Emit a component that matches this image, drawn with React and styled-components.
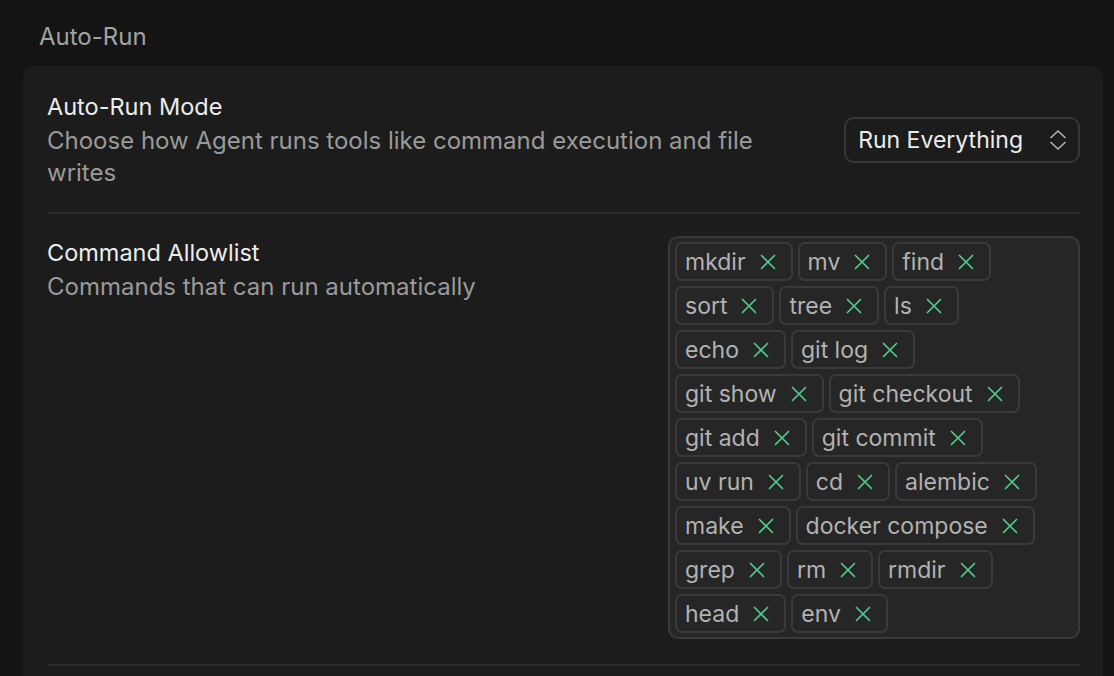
import React from 'react'
import styled, { createGlobalStyle } from 'styled-components'

const GlobalStyle = createGlobalStyle`
  html, body {
    margin: 0;
    padding: 0;
    background: #141414;
    font-family: Inter, "Noto Sans", "Liberation Sans", sans-serif;
    -webkit-font-smoothing: antialiased;
  }
`

const Page = styled.div`
  padding: 21px 11px 0 23px;
  height: 676px;
  box-sizing: border-box;
  overflow: hidden;
`

const SectionTitle = styled.div`
  color: #a3a3a3;
  font-size: 24px;
  line-height: 32px;
  padding-left: 16px;
  margin-bottom: 13px;
`

const Card = styled.div`
  background: #1c1c1c;
  border-radius: 12px;
  padding: 0 23px 0 24px;
  min-height: 700px;
`

const Row = styled.div`
  display: flex;
  align-items: ${(p) => (p.top ? 'flex-start' : 'center')};
  justify-content: space-between;
  gap: 32px;
  padding: ${(p) => (p.top ? '22px 0 25px' : '24px 0 23px')};
  border-bottom: 2px solid #2c2c2c;
`

const Info = styled.div`
  flex: 1;
  min-width: 0;
  padding-top: 1px;
`

const Label = styled.div`
  color: #ececec;
  font-size: 23.5px;
  line-height: 32px;
`

const Hint = styled.div`
  color: #9a9a9a;
  font-size: 24px;
  line-height: 32px;
  margin-top: 2px;
`

const Select = styled.div`
  display: flex;
  align-items: center;
  gap: 26px;
  height: 46px;
  box-sizing: border-box;
  padding: 0 11px 0 12px;
  border: 2px solid #373737;
  border-radius: 10px;
  color: #ececec;
  font-size: 23px;
  flex-shrink: 0;
`

const TagBox = styled.div`
  width: 412px;
  flex-shrink: 0;
  box-sizing: border-box;
  display: flex;
  flex-wrap: wrap;
  align-content: flex-start;
  gap: 5px;
  padding: 4px 16px 4px 5px;
  background: #262626;
  border: 2px solid #393939;
  border-radius: 10px;
`

const Tag = styled.div`
  display: flex;
  align-items: center;
  gap: 14px;
  height: 39px;
  box-sizing: border-box;
  padding: 0 15px 0 8px;
  border: 2px solid #3a3a3a;
  border-radius: 7px;
  color: #b2b2b2;
  font-size: 23px;
`

const Remove = styled.svg`
  width: 16px;
  height: 16px;
  flex-shrink: 0;
`

function Chevrons() {
  return (
    <svg width="18" height="24" viewBox="0 0 18 24" fill="none" stroke="#b5b5b5" strokeWidth="1.6" strokeLinecap="round" strokeLinejoin="round">
      <path d="M2 9.5 9 3l7 6.5" />
      <path d="M2 14.5 9 21l7-6.5" />
    </svg>
  )
}

const commands = [
  'mkdir', 'mv', 'find', 'sort', 'tree', 'ls', 'echo', 'git log',
  'git show', 'git checkout', 'git add', 'git commit', 'uv run', 'cd',
  'alembic', 'make', 'docker compose', 'grep', 'rm', 'rmdir', 'head', 'env',
]

export default function App() {
  return (
    <>
      <GlobalStyle />
      <Page>
        <SectionTitle>Auto-Run</SectionTitle>
        <Card>
          <Row>
            <Info>
              <Label>Auto-Run Mode</Label>
              <Hint>Choose how Agent runs tools like command execution and file writes</Hint>
            </Info>
            <Select>
              Run Everything
              <Chevrons />
            </Select>
          </Row>
          <Row top>
            <Info>
              <Label>Command Allowlist</Label>
              <Hint>Commands that can run automatically</Hint>
            </Info>
            <TagBox>
              {commands.map((c) => (
                <Tag key={c}>
                  {c}
                  <Remove viewBox="0 0 16 16" fill="none" stroke="#4fcb8c" strokeWidth="1.7" strokeLinecap="round">
                    <path d="M1.5 1.5l13 13M14.5 1.5l-13 13" />
                  </Remove>
                </Tag>
              ))}
            </TagBox>
          </Row>
        </Card>
      </Page>
    </>
  )
}
